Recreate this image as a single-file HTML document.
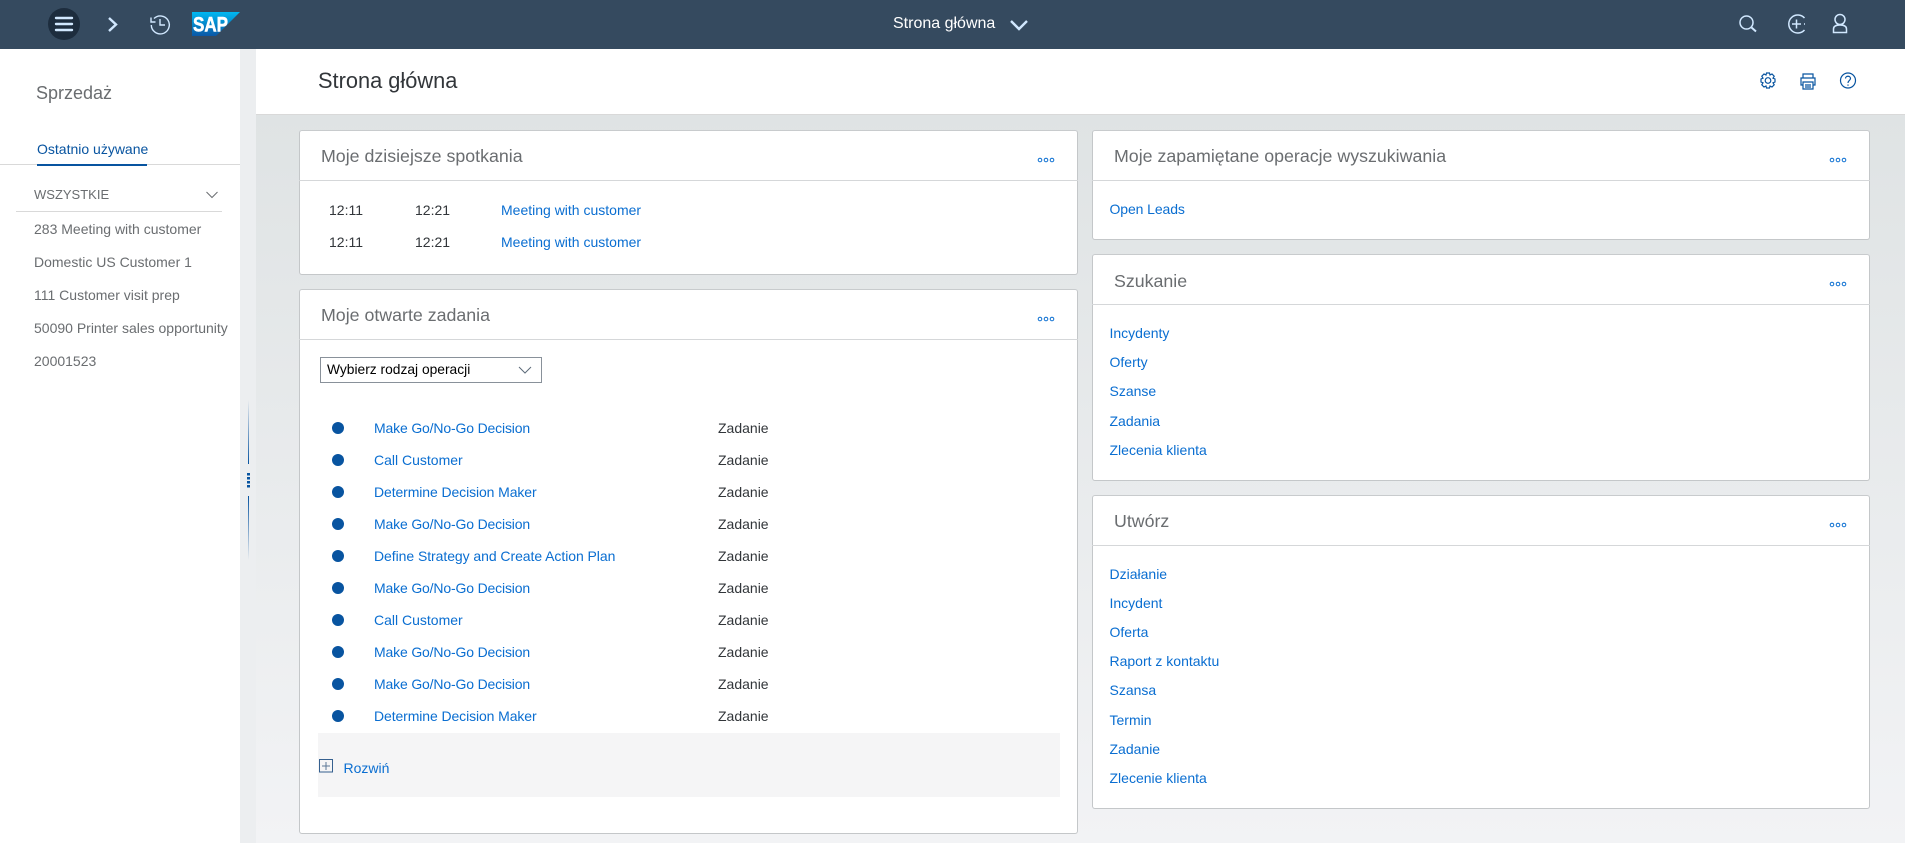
<!DOCTYPE html>
<html lang="pl">
<head>
<meta charset="utf-8">
<title>Strona główna</title>
<style>
html,body{margin:0;padding:0;width:1905px;height:843px;overflow:hidden;background:#fff;font-family:"Liberation Sans",Arial,sans-serif;}
.a{position:absolute;}
.t{position:absolute;white-space:nowrap;line-height:20px;height:20px;font-size:14px;}
.l{color:#0a6ed1;}
.s{color:#6a6d70;}
.k{color:#32363a;}
.h{color:#6a6d70;font-size:17.800px;}
.m{letter-spacing:-.16px;}
.d{letter-spacing:-.1px;}
.card{position:absolute;background:#fff;box-sizing:border-box;border:1px solid #c4c7c9;border-radius:3px;border-top-color:#c8cbcd;}
.sep{position:absolute;height:1px;background:#d5d7d9;}
.dot{position:absolute;width:12px;height:12px;border-radius:50%;background:#0854a0;left:332px;}
svg{position:absolute;overflow:visible;}
</style>
</head>
<body>
<!-- background -->
<div class="a" style="left:256px;top:114px;width:1649px;height:729px;background:linear-gradient(#dfe3e4,#f2f3f5);"></div>
<div class="a" style="left:240px;top:49px;width:16px;height:794px;background:#eceef0;"></div>
<!-- shell -->
<div class="a" style="left:0;top:0;width:1905px;height:49px;background:#354a5f;"></div>
<div class="a" style="left:48px;top:8px;width:32px;height:32px;border-radius:50%;background:#1d2d3e;"></div>
<svg style="left:0;top:0" width="300" height="49" viewBox="0 0 300 49">
  <g stroke="#d1e8ff" stroke-width="2.4" fill="none" stroke-linecap="round">
    <path d="M56 18H72M56 24H72M56 30H72"/>
  </g>
  <path d="M109 18L116 24.500L109 31" stroke="#d1e8ff" stroke-width="2.4" fill="none"/>
  <g stroke="#d1e8ff" stroke-width="1.4" fill="none">
    <path d="M154 18.500A9 9 0 1 1 151.300 25"/>
    <path d="M151 17.500V22H155.500"/>
    <path d="M160 19V25H165"/>
  </g>
  <defs><linearGradient id="g" x1="0" y1="0" x2="0" y2="1"><stop offset="0" stop-color="#00b8f1"/><stop offset="1" stop-color="#0a57a5"/></linearGradient></defs>
  <path d="M192 12H240L216 36H192Z" fill="url(#g)"/>
  <text x="193" y="31.500" font-family="Liberation Sans" font-weight="700" font-size="21" fill="#fff" stroke="#fff" stroke-width=".6" textLength="35" lengthAdjust="spacingAndGlyphs">SAP</text>
</svg>
<div class="t" style="left:893px;top:14px;font-size:16px;color:#fff;">Strona główna</div>
<svg style="left:1005px;top:15px" width="26" height="20" viewBox="0 0 26 20"><path d="M6 6L14 14L22 6" stroke="#d1e8ff" stroke-width="2.400" fill="none"/></svg>
<svg style="left:1730px;top:0" width="130" height="49" viewBox="1730 0 130 49">
  <g stroke="#d1e8ff" stroke-width="1.500" fill="none">
    <circle cx="1746.500" cy="22.500" r="6.500"/>
    <path d="M1751.500 27.500L1756 31.500" stroke-width="2"/>
    <path d="M1804.500 18A9 9 0 1 0 1804.500 30"/>
    <path d="M1796.500 19.500V28.500M1792 24H1801M1804 24H1805"/>
    <circle cx="1840" cy="19.500" r="5"/>
    <path d="M1833.500 32.500V29C1833.500 26 1836 25 1840 25S1846.500 26 1846.500 29V32.500Z"/>
  </g>
</svg>
<!-- sidebar -->
<div class="t s" style="left:36px;top:83px;font-size:18px;">Sprzedaż</div>
<div class="t" style="left:37px;top:139px;color:#0854a0;font-size:14px;">Ostatnio używane</div>
<div class="a" style="left:0;top:164px;width:240px;height:1px;background:#d9d9d9;"></div>
<div class="a" style="left:37px;top:164px;width:110px;height:2px;background:#0854a0;"></div>
<div class="t s" style="left:34px;top:185px;font-size:13px;">WSZYSTKIE</div>
<svg style="left:205px;top:189px" width="14" height="12" viewBox="0 0 14 12"><path d="M1.500 3L7 8.500L12.500 3" stroke="#6a6d70" stroke-width="1" fill="none"/></svg>
<div class="a" style="left:16px;top:211px;width:206px;height:1px;background:#d9d9d9;"></div>
<div class="t s" style="left:34px;top:219px;">283 Meeting with customer</div>
<div class="t s" style="left:34px;top:252px;">Domestic US Customer 1</div>
<div class="t s" style="left:34px;top:285px;">111 Customer visit prep</div>
<div class="t s" style="left:34px;top:318px;">50090 Printer sales opportunity</div>
<div class="t s" style="left:34px;top:351px;">20001523</div>
<!-- splitter -->
<div class="a" style="left:248px;top:400px;width:1px;height:64px;background:linear-gradient(rgba(8,84,160,0),#0854a0);"></div>
<div class="a" style="left:248px;top:496px;width:1px;height:64px;background:linear-gradient(#0854a0,rgba(8,84,160,0));"></div>
<svg style="left:246px;top:472px" width="6" height="17" viewBox="0 0 6 17"><path d="M2.500 1V16" stroke="#0854a0" stroke-width="3" stroke-dasharray="2.500 1.500" fill="none"/></svg>
<!-- title bar -->
<div class="a" style="left:256px;top:49px;width:1649px;background:#fff;border-bottom:1px solid #d9d9d9;box-sizing:border-box;height:66px;"></div>
<div class="t" style="left:318px;top:71px;font-size:21.800px;color:#32363a;">Strona główna</div>
<svg style="left:1750px;top:60px" width="120" height="40" viewBox="1750 60 120 40">
  <g stroke="#0854a0" stroke-width="1.200" fill="none">
    <circle cx="1768" cy="80.500" r="2.800"/>
    <path d="M1766.500 73H1769.500L1770 75L1772 74L1774.200 76.200L1773 78.200L1775 79V82L1773 82.800L1774.200 84.800L1772 87L1770 86L1769.500 88H1766.500L1766 86L1764 87L1761.800 84.800L1763 82.800L1761 82V79L1763 78.200L1761.800 76.200L1764 74L1766 75Z"/>
    <path d="M1803 78V74H1813V78M1803 85H1801V78H1815V85H1813"/>
    <path d="M1803 82H1813V89H1803ZM1805 85H1811M1805 87H1811"/>
    <circle cx="1848" cy="80.500" r="7.500"/>
    <path d="M1845.500 78.500C1845.500 75.500 1850.500 75.500 1850.500 78.500C1850.500 80.500 1848 80.500 1848 83M1848 84.500V85.800"/>
  </g>
</svg>

<!-- card 1 -->
<div class="card" style="left:299px;top:130px;width:779px;height:145px;"></div>
<div class="sep" style="left:299px;top:180px;width:779px;"></div>
<div class="t h" style="left:321px;top:146px;">Moje dzisiejsze spotkania</div>
<div class="t k" style="left:329px;top:200px;">12:11</div>
<div class="t k" style="left:415px;top:200px;">12:21</div>
<div class="t l" style="left:501px;top:200px;">Meeting with customer</div>
<div class="t k" style="left:329px;top:232px;">12:11</div>
<div class="t k" style="left:415px;top:232px;">12:21</div>
<div class="t l" style="left:501px;top:232px;">Meeting with customer</div>

<!-- card 2 -->
<div class="card" style="left:299px;top:289px;width:779px;height:545px;"></div>
<div class="sep" style="left:299px;top:339px;width:779px;"></div>
<div class="t h" style="left:321px;top:305px;">Moje otwarte zadania</div>
<div class="a" style="left:320px;top:357px;width:222px;height:26px;border:1px solid #89919a;box-sizing:border-box;background:#fff;"></div>
<div class="t" style="left:327px;top:360px;color:#000;font-size:13.800px;">Wybierz rodzaj operacji</div>
<svg style="left:517px;top:364px" width="16" height="12" viewBox="0 0 16 12"><path d="M2 3L8 9L14 3" stroke="#5d6b7a" stroke-width="1" fill="none"/></svg>

<div class="dot" style="top:422px"></div><div class="t l m" style="left:374px;top:418px;">Make Go/No-Go Decision</div><div class="t k" style="left:718px;top:418px;">Zadanie</div>
<div class="dot" style="top:454px"></div><div class="t l" style="left:374px;top:450px;">Call Customer</div><div class="t k" style="left:718px;top:450px;">Zadanie</div>
<div class="dot" style="top:486px"></div><div class="t l d" style="left:374px;top:482px;">Determine Decision Maker</div><div class="t k" style="left:718px;top:482px;">Zadanie</div>
<div class="dot" style="top:518px"></div><div class="t l m" style="left:374px;top:514px;">Make Go/No-Go Decision</div><div class="t k" style="left:718px;top:514px;">Zadanie</div>
<div class="dot" style="top:550px"></div><div class="t l" style="left:374px;top:546px;letter-spacing:-.06px;">Define Strategy and Create Action Plan</div><div class="t k" style="left:718px;top:546px;">Zadanie</div>
<div class="dot" style="top:582px"></div><div class="t l m" style="left:374px;top:578px;">Make Go/No-Go Decision</div><div class="t k" style="left:718px;top:578px;">Zadanie</div>
<div class="dot" style="top:614px"></div><div class="t l" style="left:374px;top:610px;">Call Customer</div><div class="t k" style="left:718px;top:610px;">Zadanie</div>
<div class="dot" style="top:646px"></div><div class="t l m" style="left:374px;top:642px;">Make Go/No-Go Decision</div><div class="t k" style="left:718px;top:642px;">Zadanie</div>
<div class="dot" style="top:678px"></div><div class="t l m" style="left:374px;top:674px;">Make Go/No-Go Decision</div><div class="t k" style="left:718px;top:674px;">Zadanie</div>
<div class="dot" style="top:710px"></div><div class="t l d" style="left:374px;top:706px;">Determine Decision Maker</div><div class="t k" style="left:718px;top:706px;">Zadanie</div>

<div class="a" style="left:318px;top:733px;width:742px;height:64px;background:#f5f5f6;"></div>
<svg style="left:319px;top:759px" width="14" height="14" viewBox="0 0 14 14"><rect x=".5" y=".5" width="13" height="12.500" fill="none" stroke="#35608f" stroke-width="1"/><path d="M7 3V11M3 7H11" stroke="#5b7896" stroke-width="1" fill="none"/></svg>
<div class="t l" style="left:343.500px;top:758px;">Rozwiń</div>

<!-- right card 1 -->
<div class="card" style="left:1092px;top:130px;width:778px;height:110px;"></div>
<div class="sep" style="left:1092px;top:180px;width:778px;"></div>
<div class="t h" style="left:1114px;top:146px;">Moje zapamiętane operacje wyszukiwania</div>
<div class="t l d" style="left:1109.500px;top:199px;">Open Leads</div>

<!-- right card 2 -->
<div class="card" style="left:1092px;top:254px;width:778px;height:227px;"></div>
<div class="sep" style="left:1092px;top:304px;width:778px;"></div>
<div class="t h" style="left:1114px;top:271px;">Szukanie</div>
<div class="t l" style="left:1109.500px;top:323px;">Incydenty</div>
<div class="t l" style="left:1109.500px;top:352px;">Oferty</div>
<div class="t l" style="left:1109.500px;top:381px;">Szanse</div>
<div class="t l" style="left:1109.500px;top:411px;">Zadania</div>
<div class="t l" style="left:1109.500px;top:440px;">Zlecenia klienta</div>

<!-- right card 3 -->
<div class="card" style="left:1092px;top:495px;width:778px;height:314px;"></div>
<div class="sep" style="left:1092px;top:545px;width:778px;"></div>
<div class="t h" style="left:1114px;top:511px;">Utwórz</div>
<div class="t l" style="left:1109.500px;top:564px;">Działanie</div>
<div class="t l" style="left:1109.500px;top:593px;">Incydent</div>
<div class="t l" style="left:1109.500px;top:622px;">Oferta</div>
<div class="t l" style="left:1109.500px;top:651px;">Raport z kontaktu</div>
<div class="t l" style="left:1109.500px;top:680px;">Szansa</div>
<div class="t l" style="left:1109.500px;top:710px;">Termin</div>
<div class="t l" style="left:1109.500px;top:739px;">Zadanie</div>
<div class="t l" style="left:1109.500px;top:768px;">Zlecenie klienta</div>

<!-- overflow dots -->
<svg style="left:0;top:0" width="1905" height="843" viewBox="0 0 1905 843">
  <g fill="none" stroke="#0a6ed1" stroke-width="1">
    <circle cx="1040" cy="160" r="1.800"/><circle cx="1046" cy="160" r="1.800"/><circle cx="1052" cy="160" r="1.800"/>
    <circle cx="1040" cy="319" r="1.800"/><circle cx="1046" cy="319" r="1.800"/><circle cx="1052" cy="319" r="1.800"/>
    <circle cx="1832" cy="160" r="1.800"/><circle cx="1838" cy="160" r="1.800"/><circle cx="1844" cy="160" r="1.800"/>
    <circle cx="1832" cy="284" r="1.800"/><circle cx="1838" cy="284" r="1.800"/><circle cx="1844" cy="284" r="1.800"/>
    <circle cx="1832" cy="525" r="1.800"/><circle cx="1838" cy="525" r="1.800"/><circle cx="1844" cy="525" r="1.800"/>
  </g>
</svg>
</body>
</html>
